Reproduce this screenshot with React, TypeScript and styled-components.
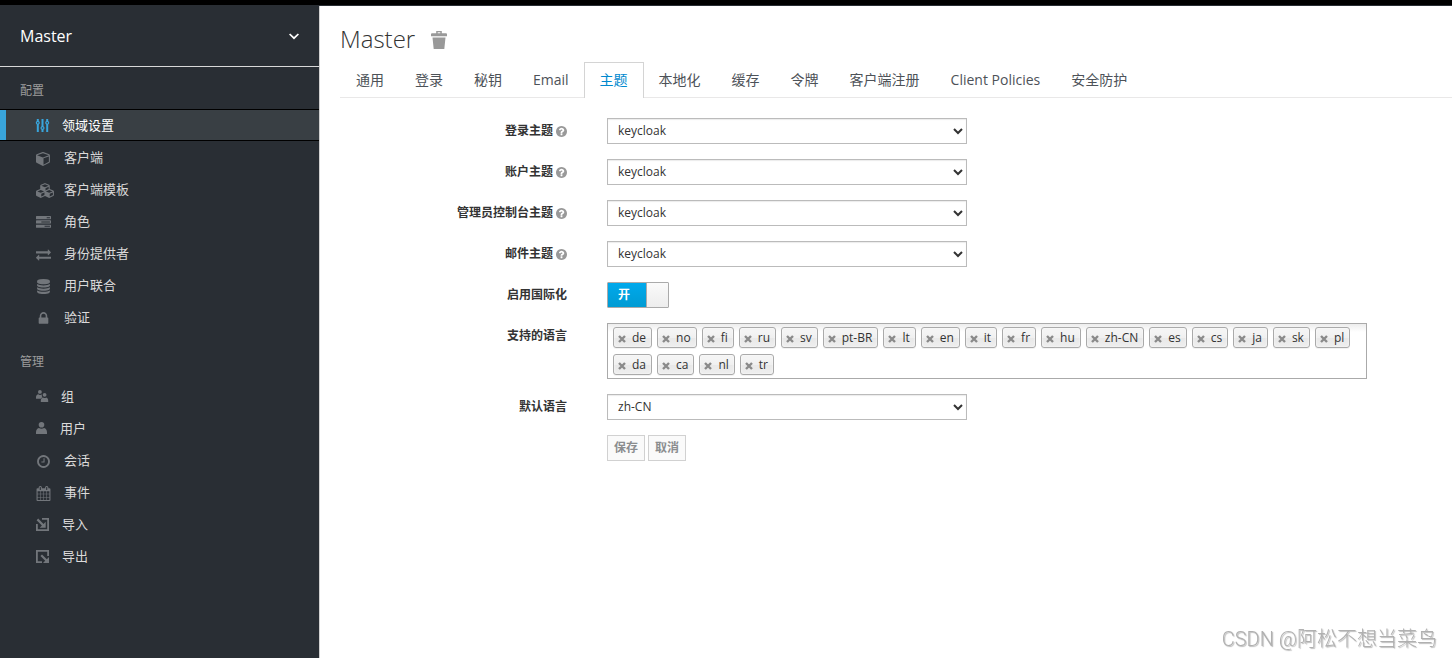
import React from "react";
import styled, { createGlobalStyle, css } from "styled-components";

const GlobalStyle = createGlobalStyle`
  *, *::before, *::after { box-sizing: border-box; }
  html, body, #root { height: 100%; }
  body {
    margin: 0;
    background: #fff;
    color: #333;
    font-family: "Open Sans", "Noto Sans CJK SC", sans-serif;
    font-size: 12px;
    line-height: 20px;
  }
`;

/* ---------- icons ---------- */

const Svg = styled.svg`
  display: block;
  flex: none;
  fill: currentColor;
  overflow: visible;
`;

const fontPaths = {
  cube: "M896 1629l640-349v-636l-640 233v752zm-64-865l698-254-698-254-698 254zm832-252v768q0 35-18 65t-49 47l-704 384q-28 16-61 16t-61-16l-704-384q-31-17-49-47t-18-65v-768q0-40 23-73t61-50l704-256q22-8 44-8t44 8l704 256q38 17 61 50t23 73z",
  cubes:
    "M640 1632l384-192v-314l-384 164v342zm-64-454l404-173-404-173-404 173zm1088 454l384-192v-314l-384 164v342zm-64-454l404-173-404-173-404 173zm-448-293l384-165v-266l-384 164v267zm-64-379l441-189-441-189-441 189zm1088 518v416q0 36-19 67t-52 47l-448 224q-25 14-57 14t-57-14l-448-224q-4-2-7-4-2 2-7 4l-448 224q-25 14-57 14t-57-14l-448-224q-33-16-52-47t-19-67v-416q0-38 21.500-70t56.500-48l434-186v-400q0-38 21.500-70t56.500-48l448-192q23-10 50-10t50 10l448 192q35 16 56.500 48t21.500 70v400l434 186q36 16 57 48t21 70z",
  tasks:
    "M1024 1408h640v-128h-640v128zm-384-512h1024v-128h-1024v128zm640-512h384v-128h-384v128zm512 832v256q0 26-19 45t-45 19h-1664q-26 0-45-19t-19-45v-256q0-26 19-45t45-19h1664q26 0 45 19t19 45zm0-512v256q0 26-19 45t-45 19h-1664q-26 0-45-19t-19-45v-256q0-26 19-45t45-19h1664q26 0 45 19t19 45zm0-512v256q0 26-19 45t-45 19h-1664q-26 0-45-19t-19-45v-256q0-26 19-45t45-19h1664q26 0 45 19t19 45z",
  exchange:
    "M1792 1184v192q0 13-9.500 22.500t-22.500 9.500h-1376v192q0 13-9.500 22.500t-22.500 9.500q-12 0-24-10l-319-320q-9-9-9-22 0-14 9-23l320-320q9-9 23-9 13 0 22.500 9.500t9.500 22.500v192h1376q13 0 22.500 9.500t9.500 22.500zm0-544q0 14-9 23l-320 320q-9 9-23 9-13 0-22.500-9.500t-9.500-22.500v-192h-1376q-13 0-22.500-9.500t-9.500-22.500v-192q0-13 9.500-22.500t22.500-9.500h1376v-192q0-14 9-23t23-9q12 0 24 10l319 319q9 9 9 23z",
  database:
    "M896 768q237 0 443-43t325-127v170q0 69-103 128t-280 93.500-385 34.500-385-34.500-280-93.500-103-128v-170q119 84 325 127t443 43zm0 768q237 0 443-43t325-127v170q0 69-103 128t-280 93.500-385 34.500-385-34.500-280-93.500-103-128v-170q119 84 325 127t443 43zm0-384q237 0 443-43t325-127v170q0 69-103 128t-280 93.500-385 34.500-385-34.500-280-93.500-103-128v-170q119 84 325 127t443 43zm0-1152q208 0 385 34.500t280 93.500 103 128v128q0 69-103 128t-280 93.500-385 34.500-385-34.500-280-93.500-103-128v-128q0-69 103-128t280-93.500 385-34.500z",
  lock: "M640 768h512v-192q0-106-75-181t-181-75-181 75-75 181v192zm832 96v576q0 40-28 68t-68 28h-960q-40 0-68-28t-28-68v-576q0-40 28-68t68-28h32v-192q0-184 132-316t316-132 316 132 132 316v192h32q40 0 68 28t28 68z",
  clock:
    "M1024 544v448q0 14-9 23t-23 9h-320q-14 0-23-9t-9-23v-64q0-14 9-23t23-9h224v-352q0-14 9-23t23-9h64q14 0 23 9t9 23zm416 352q0-148-73-273t-198-198-273-73-273 73-198 198-73 273 73 273 198 198 273 73 273-73 198-198 73-273zm224 0q0 209-103 385.500t-279.500 279.500-385.500 103-385.500-103-279.500-279.500-103-385.500 103-385.500 279.500-279.500 385.500-103 385.500 103 279.500 279.500 103 385.500z",
  calendar:
    "M192 1664h288v-288h-288v288zm352 0h320v-288h-320v288zm-352-352h288v-320h-288v320zm352 0h320v-320h-320v320zm-352-384h288v-288h-288v288zm736 736h320v-288h-320v288zm-384-736h320v-288h-320v288zm768 736h288v-288h-288v288zm-384-352h320v-320h-320v320zm-352-864v-288q0-13-9.500-22.500t-22.500-9.500h-64q-13 0-22.500 9.500t-9.500 22.500v288q0 13 9.500 22.500t22.500 9.500h64q13 0 22.500-9.500t9.500-22.500zm736 864h288v-320h-288v320zm-384-384h320v-288h-320v288zm384 0h288v-288h-288v288zm32-480v-288q0-13-9.500-22.500t-22.500-9.500h-64q-13 0-22.500 9.500t-9.500 22.500v288q0 13 9.500 22.500t22.500 9.500h64q13 0 22.500-9.500t9.500-22.500zm384-64v1280q0 52-38 90t-90 38h-1408q-52 0-90-38t-38-90v-1280q0-52 38-90t90-38h128v-96q0-66 47-113t113-47h64q66 0 113 47t47 113v96h384v-96q0-66 47-113t113-47h64q66 0 113 47t47 113v96h128q52 0 90 38t38 90z",
  question:
    "M1024 1376v-192q0-14-9-23t-23-9h-192q-14 0-23 9t-9 23v192q0 14 9 23t23 9h192q14 0 23-9t9-23zm256-672q0-88-55.500-163t-138.500-116-170-41q-243 0-371 213-15 24 8 42l132 100q7 6 19 6 16 0 25-12 53-68 86-92 34-24 86-24 48 0 85.500 26t37.500 59q0 38-20 61t-68 45q-63 28-115.500 86.500t-52.500 125.500v36q0 14 9 23t23 9h192q14 0 23-9t9-23q0-19 21.500-49.500t54.500-49.500q32-18 49-28.500t46-35 44.500-48 28-60.500 12.500-81zm384 192q0 209-103 385.500t-279.500 279.500-385.500 103-385.500-103-279.500-279.500-103-385.500 103-385.500 279.500-279.500 385.500-103 385.500 103 279.500 279.500 103 385.500z",
};

type FontIconName = keyof typeof fontPaths;

function FontIcon({ name, size = 15 }: { name: FontIconName; size?: number }) {
  const box = name === "cubes" ? "0 0 2304 1792" : name === "question" ? "128 128 1536 1536" : "0 0 1792 1792";
  const width = name === "cubes" ? 19 : size;
  return (
    <Svg width={width} height={size} viewBox={box} aria-hidden="true">
      <path d={fontPaths[name]} />
    </Svg>
  );
}

const SettingsIcon = () => (
  <Svg width="13" height="13" viewBox="0 0 13 13" aria-hidden="true">
    <path d="M.8 0h2v2.100a2 2 0 0 1 0 3.500V13h-2V5.600a2 2 0 0 1 0-3.500zM5.500 0h2v7.200a2 2 0 0 1 0 3.500V13h-2v-2.300a2 2 0 0 1 0-3.500zM10.200 0h2v2.100a2 2 0 0 1 0 3.500V13h-2V5.600a2 2 0 0 1 0-3.500z" />
    <g fill="#393f44">
      <circle cx="1.800" cy="3.850" r=".8" />
      <circle cx="6.500" cy="8.950" r=".8" />
      <circle cx="11.200" cy="3.850" r=".8" />
    </g>
  </Svg>
);

const UsersIcon = () => (
  <Svg width="12" height="12" viewBox="0 0 12 12" aria-hidden="true">
    <circle cx="3.900" cy="1.900" r="1.900" />
    <circle cx="8.600" cy="4.800" r="1.900" />
    <path d="M0 8.800V7.200c0-1.500 1-2.600 2.300-2.900.9.800 2.100.8 3 .1l.6.300c-.3 1.200.1 2 .6 2.500-.9.300-1.500.9-1.900 1.600z" />
    <path d="M4.800 12v-1.600c0-1.600 1-2.700 2.300-3 .9.700 2.200.7 3.100 0 1.200.4 2 1.500 2 3V12z" />
  </Svg>
);

const UserIcon = () => (
  <Svg width="11" height="12" viewBox="0 0 11 12" aria-hidden="true">
    <circle cx="5.500" cy="2.800" r="2.800" />
    <path d="M0 12v-1.700c0-2.100 1.100-3.700 2.900-4.200 1.500 1 3.700 1 5.200 0C9.900 6.600 11 8.200 11 10.300V12z" />
  </Svg>
);

const ImportIcon = () => (
  <Svg width="13" height="13" viewBox="0 0 13 13" aria-hidden="true">
    <path d="M6 0h7v13H0V6h1.800v5.200h9.400V1.800H6z" />
    <path d="M2.200.6l5.300 5.300 2.200-2.200v6H3.700l2.200-2.200L.6 2.200z" />
  </Svg>
);

const ExportIcon = () => (
  <Svg width="13" height="13" viewBox="0 0 13 13" aria-hidden="true">
    <path d="M0 0h13v6h-1.800V1.800H1.800v9.400H6V13H0z" />
    <path d="M6 4.400l4.800 4.800L13 7v6H7l2.200-2.200L4.400 6z" />
  </Svg>
);

const ChevronIcon = () => (
  <Svg width="10" height="7" viewBox="0 0 10 7" aria-hidden="true">
    <path d="M.6 1L5 5.200 9.400 1" fill="none" stroke="currentColor" strokeWidth="1.700" />
  </Svg>
);

const TrashIcon = () => (
  <Svg width="16" height="18" viewBox="0 0 16 18" aria-hidden="true">
    <path
      fillRule="evenodd"
      d="M5.200 0h5.600v2.200H15a1 1 0 0 1 1 1v2H0v-2a1 1 0 0 1 1-1h4.200zM6.700 1.200v1h2.600v-1zM1.500 6.500h13L13.300 18H2.700z"
    />
  </Svg>
);

const CrossIcon = () => (
  <Svg width="8" height="8" viewBox="0 0 8 8" aria-hidden="true">
    <path d="M1 1l6 6M7 1L1 7" stroke="currentColor" strokeWidth="2.400" />
  </Svg>
);

/* ---------- page frame ---------- */

const Page = styled.div`
  display: flex;
  flex-direction: column;
  min-height: 100%;
`;

const TopBar = styled.header`
  height: 6px;
  background: #000;
  border-bottom: 1px solid #292e34;
`;

const Body = styled.div`
  display: flex;
  flex: 1;
`;

const Sidebar = styled.aside`
  flex: 0 0 320px;
  background: #292e34;
  border-right: 1px solid #d1d1d1;
`;

const RealmButton = styled.button`
  display: flex;
  align-items: center;
  justify-content: space-between;
  width: 100%;
  height: 61px;
  padding: 0 20px;
  border: 0;
  border-bottom: 1px solid #d8d8d8;
  background: none;
  color: #fff;
  font: inherit;
  font-size: 16px;
`;

const NavTitle = styled.h2`
  margin: 0;
  padding: 14px 20px 8px;
  color: #9c9c9c;
  font-size: 12px;
  font-weight: 400;
  line-height: 20px;
`;

const NavList = styled.ul`
  margin: 0 0 5px;
  padding: 0;
  list-style: none;
`;

const NavLink = styled.a<{ $active?: boolean }>`
  display: flex;
  align-items: center;
  gap: 13px;
  height: 32px;
  padding: 0 20px 0 36px;
  color: #dbdada;
  font-size: 13px;
  text-decoration: none;
  ${(p) =>
    p.$active &&
    css`
      border: solid #000;
      border-width: 1px 0;
      background: #393f44;
      color: #fff;
      box-shadow: inset 6px 0 #39a5dc;
    `}
`;

const NavIcon = styled.span<{ $width: number; $active?: boolean }>`
  display: flex;
  width: ${(p) => p.$width}px;
  padding-top: ${(p) => (p.$width === 15 ? 2 : 0)}px;
  color: ${(p) => (p.$active ? "#39a5dc" : "#72767b")};
`;

/* ---------- content ---------- */

const Main = styled.main`
  flex: 1;
  min-width: 0;
  padding: 20px 0 20px 20px;
`;

const TitleRow = styled.div`
  display: flex;
  align-items: center;
  gap: 16px;
  height: 28px;
`;

const Title = styled.h1`
  margin: 0;
  padding-bottom: 2px;
  font-size: 24px;
  font-weight: 300;
  line-height: 28px;
`;

const IconButton = styled.button`
  display: flex;
  padding: 0;
  border: 0;
  background: none;
  color: #999;
`;

const Tabs = styled.nav`
  display: flex;
  margin-top: 8px;
  border-bottom: 1px solid #e9e8e8;
`;

const Tab = styled.a<{ $active?: boolean }>`
  margin: 0 0 -1px;
  padding: 7px 15px 8px;
  border: 1px solid transparent;
  border-bottom: 0;
  color: #4d5258;
  font-size: 14px;
  line-height: 20px;
  text-decoration: none;
  white-space: nowrap;
  & + & {
    margin-left: -1px;
  }
  ${(p) =>
    p.$active &&
    css`
      border-color: #d4d4d4;
      background: #fff;
      color: #0088ce;
    `}
`;

const Form = styled.form`
  display: flex;
  flex-direction: column;
  gap: 15px;
  padding: 20px 40px 0 0;
`;

const Row = styled.div`
  display: grid;
  grid-template-columns: 227px minmax(0, 760px);
  column-gap: 40px;
  align-items: start;
`;

const LabelCell = styled.div`
  display: flex;
  align-items: center;
  justify-content: flex-end;
  gap: 3px;
  height: 26px;
  color: #999;
`;

const LabelText = styled.label`
  color: #333;
  font-weight: 600;
`;

const Select = styled.select`
  width: 100%;
  max-width: 360px;
  height: 26px;
  padding: 0 0 2px 6px;
  border: 1px solid #bbb;
  border-radius: 0;
  background: #fff;
  color: #333;
  font: inherit;
  box-shadow: inset 0 1px 1px rgba(0, 0, 0, 0.08);
`;

const Switch = styled.label`
  position: relative;
  display: flex;
  width: 62px;
  height: 26px;
  border: 1px solid #aaa;
  border-radius: 1px;
  overflow: hidden;
`;

const SwitchInput = styled.input`
  position: absolute;
  inset: 0;
  margin: 0;
  opacity: 0;
`;

const SwitchOn = styled.span`
  flex: 1;
  padding-left: 10px;
  background: linear-gradient(#00a9ec, #009bd3);
  color: #fff;
  font-weight: 700;
  line-height: 24px;
`;

const SwitchKnob = styled.span`
  width: 22px;
  border-left: 1px solid #aaa;
  background: linear-gradient(#fafafa, #ededed);
`;

const TagBox = styled.ul`
  display: flex;
  flex-wrap: wrap;
  gap: 6px 5px;
  margin: 0;
  padding: 3px 5px;
  border: 1px solid #aaa;
  background: linear-gradient(#eee 1%, #fff 15%);
  list-style: none;
`;

const Tag = styled.li`
  display: flex;
  align-items: center;
  gap: 6px;
  height: 21px;
  padding: 0 5px 0 4px;
  border: 1px solid #aaa;
  border-radius: 3px;
  background: linear-gradient(#f4f4f4 20%, #f0f0f0 50%, #e8e8e8 52%, #eee 100%);
  box-shadow: 0 0 2px #fff inset, 0 1px 0 rgba(0, 0, 0, 0.05);
  line-height: 13px;
`;

const TagRemove = styled(IconButton)`
  padding-top: 2px;
  color: #8a8a8a;
`;

const Actions = styled.div`
  display: flex;
  grid-column: 2;
  gap: 3px;
`;

const ActionButton = styled.button`
  height: 26px;
  padding: 0 6px;
  border: 1px solid #d1d1d1;
  background: #fafafa;
  color: #8b8d8f;
  font: inherit;
  font-weight: 600;
`;

const Watermark = styled.div`
  position: fixed;
  right: 15px;
  bottom: 5px;
  color: #b0b0b0;
  font-family: Roboto, "Noto Sans CJK SC", sans-serif;
  font-size: 20px;
  font-weight: 300;
  line-height: 28px;
  text-shadow: 1px 1px 1px #bbb, -1px -1px 0 #fff;
`;

/* ---------- data ---------- */

type NavItem = { label: string; icon: React.ReactNode; width: number; active?: boolean };

const configure: NavItem[] = [
  { label: "领域设置", icon: <SettingsIcon />, width: 13, active: true },
  { label: "客户端", icon: <FontIcon name="cube" />, width: 15 },
  { label: "客户端模板", icon: <FontIcon name="cubes" />, width: 15 },
  { label: "角色", icon: <FontIcon name="tasks" />, width: 15 },
  { label: "身份提供者", icon: <FontIcon name="exchange" />, width: 15 },
  { label: "用户联合", icon: <FontIcon name="database" />, width: 15 },
  { label: "验证", icon: <FontIcon name="lock" />, width: 15 },
];

const manage: NavItem[] = [
  { label: "组", icon: <UsersIcon />, width: 12 },
  { label: "用户", icon: <UserIcon />, width: 11 },
  { label: "会话", icon: <FontIcon name="clock" />, width: 15 },
  { label: "事件", icon: <FontIcon name="calendar" />, width: 15 },
  { label: "导入", icon: <ImportIcon />, width: 13 },
  { label: "导出", icon: <ExportIcon />, width: 13 },
];

const tabs = ["通用", "登录", "秘钥", "Email", "主题", "本地化", "缓存", "令牌", "客户端注册", "Client Policies", "安全防护"];

const themes = [
  { id: "login", label: "登录主题" },
  { id: "account", label: "账户主题" },
  { id: "admin", label: "管理员控制台主题" },
  { id: "email", label: "邮件主题" },
];

const locales = [
  "de", "no", "fi", "ru", "sv", "pt-BR", "lt", "en", "it", "fr", "hu",
  "zh-CN", "es", "cs", "ja", "sk", "pl", "da", "ca", "nl", "tr",
];

function NavSection({ title, items }: { title: string; items: NavItem[] }) {
  return (
    <section>
      <NavTitle>{title}</NavTitle>
      <NavList>
        {items.map((item) => (
          <li key={item.label}>
            <NavLink href="#" $active={item.active}>
              <NavIcon $width={item.width} $active={item.active}>
                {item.icon}
              </NavIcon>
              {item.label}
            </NavLink>
          </li>
        ))}
      </NavList>
    </section>
  );
}

export default function App() {
  return (
    <Page>
      <GlobalStyle />
      <TopBar />
      <Body>
        <Sidebar>
          <RealmButton type="button">
            Master
            <ChevronIcon />
          </RealmButton>
          <NavSection title="配置" items={configure} />
          <NavSection title="管理" items={manage} />
        </Sidebar>
        <Main>
          <TitleRow>
            <Title>Master</Title>
            <IconButton type="button" aria-label="删除">
              <TrashIcon />
            </IconButton>
          </TitleRow>
          <Tabs>
            {tabs.map((tab) => (
              <Tab key={tab} href="#" $active={tab === "主题"}>
                {tab}
              </Tab>
            ))}
          </Tabs>
          <Form>
            {themes.map(({ id, label }) => (
              <Row key={id}>
                <LabelCell>
                  <LabelText htmlFor={id}>{label}</LabelText>
                  <FontIcon name="question" size={11} />
                </LabelCell>
                <Select id={id} defaultValue="keycloak">
                  <option>keycloak</option>
                </Select>
              </Row>
            ))}
            <Row>
              <LabelCell>
                <LabelText htmlFor="i18n">启用国际化</LabelText>
              </LabelCell>
              <Switch>
                <SwitchInput id="i18n" type="checkbox" defaultChecked />
                <SwitchOn>开</SwitchOn>
                <SwitchKnob />
              </Switch>
            </Row>
            <Row>
              <LabelCell>
                <LabelText as="span" id="locales-label">
                  支持的语言
                </LabelText>
              </LabelCell>
              <TagBox aria-labelledby="locales-label">
                {locales.map((code) => (
                  <Tag key={code}>
                    <TagRemove type="button" aria-label={`移除 ${code}`}>
                      <CrossIcon />
                    </TagRemove>
                    {code}
                  </Tag>
                ))}
              </TagBox>
            </Row>
            <Row>
              <LabelCell>
                <LabelText htmlFor="default-locale">默认语言</LabelText>
              </LabelCell>
              <Select id="default-locale" defaultValue="zh-CN">
                <option>zh-CN</option>
              </Select>
            </Row>
            <Row>
              <Actions>
                <ActionButton type="submit" disabled>
                  保存
                </ActionButton>
                <ActionButton type="reset" disabled>
                  取消
                </ActionButton>
              </Actions>
            </Row>
          </Form>
        </Main>
      </Body>
      <Watermark>CSDN @阿松不想当菜鸟</Watermark>
    </Page>
  );
}
